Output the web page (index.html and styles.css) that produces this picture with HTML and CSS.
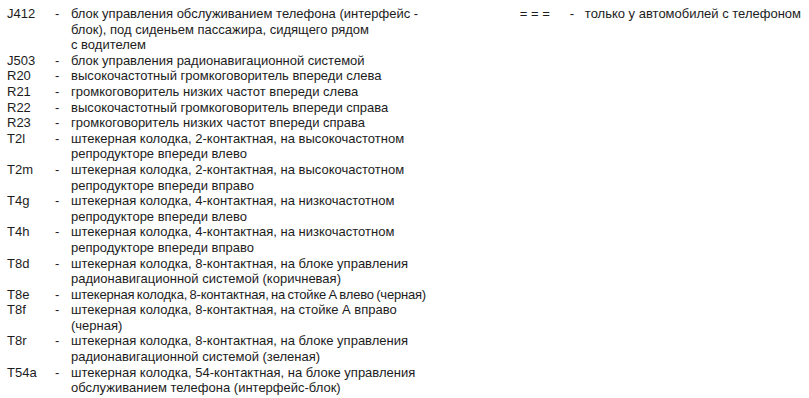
FILE: index.html
```html
<!DOCTYPE html>
<html lang="ru">
<head>
<meta charset="utf-8">
<link rel="stylesheet" href="styles.css">
</head>
<body>
<div class="page">
  <div class="legend">
    <div class="code">J412</div><div class="dash">-</div><div class="desc">блок управления обслуживанием телефона (интерфейс -<br>блок), под сиденьем пассажира, сидящего рядом<br>с водителем</div>
    <div class="code">J503</div><div class="dash">-</div><div class="desc">блок управления радионавигационной системой</div>
    <div class="code">R20</div><div class="dash">-</div><div class="desc">высокочастотный громкоговоритель впереди слева</div>
    <div class="code">R21</div><div class="dash">-</div><div class="desc">громкоговоритель низких частот впереди слева</div>
    <div class="code">R22</div><div class="dash">-</div><div class="desc">высокочастотный громкоговоритель впереди справа</div>
    <div class="code">R23</div><div class="dash">-</div><div class="desc">громкоговоритель низких частот впереди справа</div>
    <div class="code">T2l</div><div class="dash">-</div><div class="desc">штекерная колодка, 2-контактная, на высокочастотном<br>репродукторе впереди влево</div>
    <div class="code">T2m</div><div class="dash">-</div><div class="desc">штекерная колодка, 2-контактная, на высокочастотном<br>репродукторе впереди вправо</div>
    <div class="code">T4g</div><div class="dash">-</div><div class="desc">штекерная колодка, 4-контактная, на низкочастотном<br>репродукторе впереди влево</div>
    <div class="code">T4h</div><div class="dash">-</div><div class="desc">штекерная колодка, 4-контактная, на низкочастотном<br>репродукторе впереди вправо</div>
    <div class="code">T8d</div><div class="dash">-</div><div class="desc">штекерная колодка, 8-контактная, на блоке управления<br>радионавигационной системой (коричневая)</div>
    <div class="code">T8e</div><div class="dash">-</div><div class="desc tight">штекерная колодка, 8-контактная, на стойке А влево (черная)</div>
    <div class="code">T8f</div><div class="dash">-</div><div class="desc">штекерная колодка, 8-контактная, на стойке А вправо<br>(черная)</div>
    <div class="code">T8r</div><div class="dash">-</div><div class="desc">штекерная колодка, 8-контактная, на блоке управления<br>радионавигационной системой (зеленая)</div>
    <div class="code">T54a</div><div class="dash">-</div><div class="desc">штекерная колодка, 54-контактная, на блоке управления<br>обслуживанием телефона (интерфейс-блок)</div>
  </div>
  <div class="legend legend-side">
    <div class="code">= = =</div><div class="dash">-</div><div class="desc">только у автомобилей с телефоном</div>
  </div>
</div>
</body>
</html>
```

FILE: styles.css
```css
html, body {
  margin: 0;
  padding: 0;
  background: #ffffff;
}
body {
  font-family: "Liberation Sans", Arial, sans-serif;
  font-size: 13px;
  line-height: 15.6px;
  color: #1c1c1c;
}
.page {
  display: flex;
  padding: 6px 0 0 7px;
}
.legend {
  display: grid;
  grid-template-columns: 48px 16px auto;
  align-content: start;
}
.legend-side {
  margin-left: auto;
  margin-right: 8px;
  grid-template-columns: 50px 15px auto;
}
.desc {
  white-space: nowrap;
}
.tight {
  letter-spacing: -0.2px;
  word-spacing: -1px;
}
```
